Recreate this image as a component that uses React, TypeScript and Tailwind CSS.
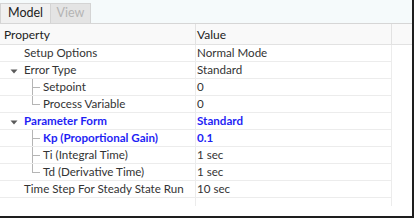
import React from "react";

type Row = {
  label: string;
  value: string;
  level: 0 | 1;
  expander?: boolean;
  bold?: boolean;
  last?: boolean;
};

const rows: Row[] = [
  { label: "Setup Options", value: "Normal Mode", level: 0 },
  { label: "Error Type", value: "Standard", level: 0, expander: true },
  { label: "Setpoint", value: "0", level: 1 },
  { label: "Process Variable", value: "0", level: 1, last: true },
  { label: "Parameter Form", value: "Standard", level: 0, expander: true, bold: true },
  { label: "Kp (Proportional Gain)", value: "0.1", level: 1, bold: true },
  { label: "Ti (Integral Time)", value: "1 sec", level: 1 },
  { label: "Td (Derivative Time)", value: "1 sec", level: 1, last: true },
  { label: "Time Step For Steady State Run", value: "10 sec", level: 0 },
];

function Expander() {
  return (
    <svg width="8" height="5" viewBox="0 0 8 5" className="absolute left-[10px] top-[7px]">
      <path d="M0.5 0.5 L7.5 0.5 L4 4.5 Z" fill="#5a5a5a" />
    </svg>
  );
}

function TreeLine({ last }: { last?: boolean }) {
  return (
    <>
      <div
        className={`absolute left-[32px] top-0 w-px bg-[#b5b5b5] ${last ? "h-[9px]" : "h-full"}`}
      />
      <div className="absolute left-[32px] top-[8px] h-px w-[8px] bg-[#b5b5b5]" />
    </>
  );
}

export default function App() {
  return (
    <div
      className="relative h-[219px] w-[415px] overflow-hidden bg-white text-[11.6px] text-[#333]"
      style={{ fontFamily: 'Lato, "Open Sans", sans-serif' }}
    >
      <div className="border-r-2 border-b-2 border-[#1e1e1e] h-[218px] w-[414px]">
        {/* Tab strip */}
        <div className="flex h-[24px] items-end border-b border-[#d6d6d6] bg-[#f5fafb]">
          <div className="flex h-[20px] w-[51px] items-center justify-center border border-b-0 border-[#d4d4d4] bg-[#f0f0f0] text-[12.5px] text-[#222]">
            Model
          </div>
          <div className="flex h-[20px] w-[40px] items-center justify-center border-r border-t border-[#d4d4d4] bg-[#e4e4e4] text-[12.5px] text-[#b4b4b4]">
            View
          </div>
        </div>

        {/* Grid */}
        <div className="flex h-[21px] border-b border-[#e2e2e2] bg-[#f9f9f9] text-[12px]">
          <div className="flex w-[196px] items-center border-r border-[#e2e2e2] pl-[4px] pt-[1px] text-[#222]">
            Property
          </div>
          <div className="flex w-[196px] items-center border-r border-[#e2e2e2] pl-[1px] pt-[1px] text-[#222]">
            Value
          </div>
        </div>

        {rows.map((r) => (
          <div key={r.label} className="flex h-[17px]">
            <div
              className={`relative flex w-[196px] items-center whitespace-nowrap border-r border-b border-[#ececec] leading-none ${
                r.level === 1 ? "pl-[43px]" : "pl-[24px]"
              } ${r.bold ? "font-bold text-[#1f1ff5]" : ""}`}
            >
              {r.expander && <Expander />}
              {r.level === 1 && <TreeLine last={r.last} />}
              {r.label}
            </div>
            <div
              className={`flex w-[196px] items-center whitespace-nowrap border-r border-b border-[#ececec] pl-[1px] leading-none ${
                r.bold ? "font-bold text-[#1f1ff5]" : ""
              }`}
            >
              {r.value}
            </div>
          </div>
        ))}

        <div className="flex h-[8px]">
          <div className="w-[196px] border-r border-[#ececec]" />
          <div className="w-[196px] border-r border-[#ececec]" />
        </div>
      </div>
    </div>
  );
}
